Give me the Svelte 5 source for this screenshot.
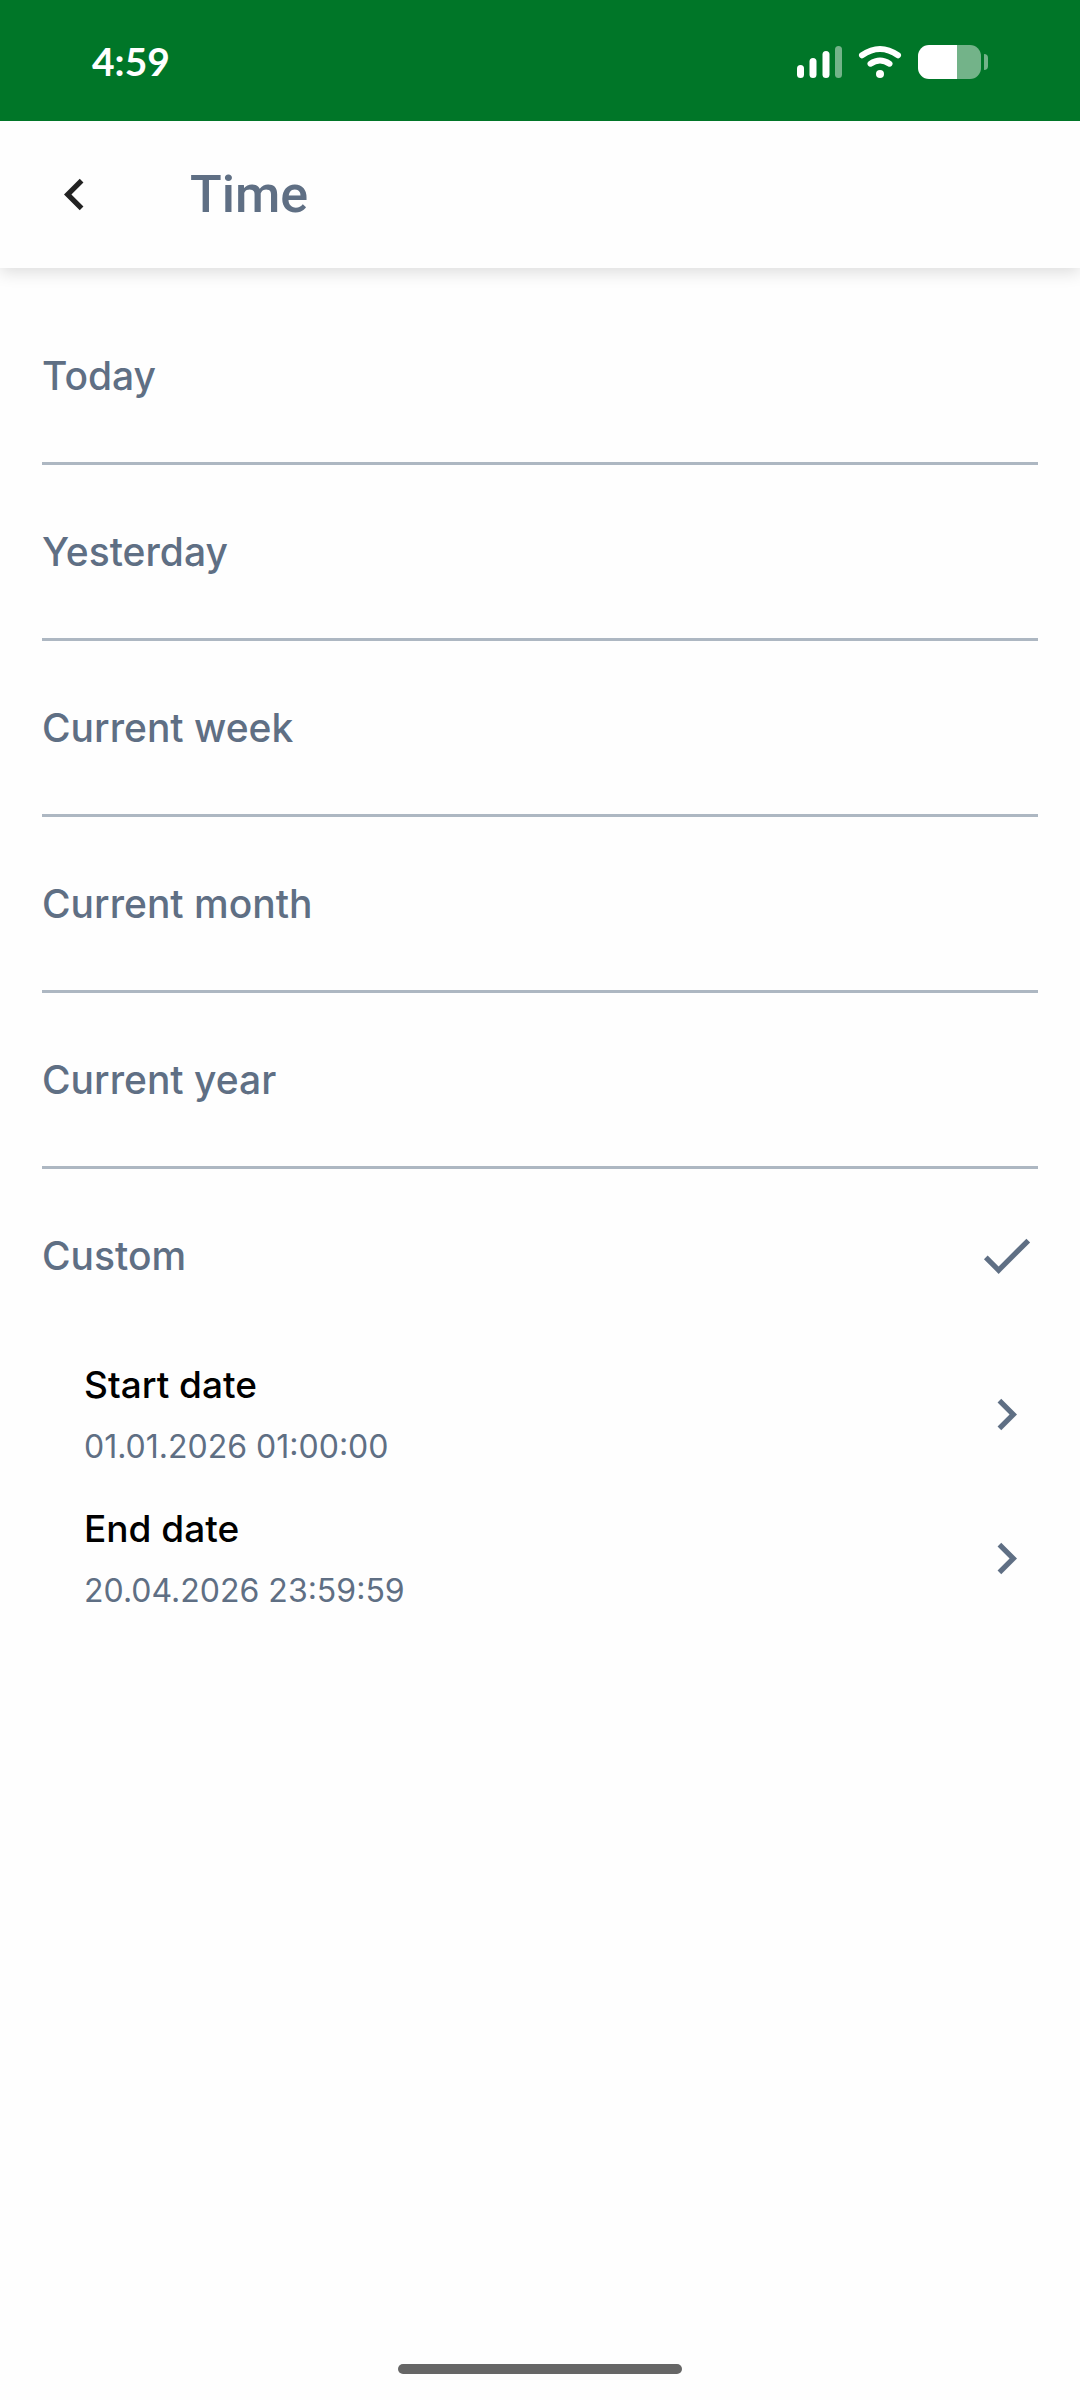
<script>
    let selected = $state('Custom');

    const periods = ['Today', 'Yesterday', 'Current week', 'Current month', 'Current year', 'Custom'];

    const dates = [
        { label: 'Start date', value: '01.01.2026 01:00:00' },
        { label: 'End date', value: '20.04.2026 23:59:59' }
    ];
</script>

<div class="screen">
    <div class="status-bar">
        <span class="clock">4:59</span>
        <div class="indicators">
            <svg width="45" height="34" viewBox="0 0 45 34" fill="#fff" aria-hidden="true">
                <rect x="0" y="20" width="7" height="13" rx="3.5" />
                <rect x="12.5" y="13" width="7" height="20" rx="3.5" />
                <rect x="25.5" y="6" width="7" height="27" rx="3.5" />
                <rect x="38" y="1" width="7" height="32" rx="3.5" opacity="0.45" />
            </svg>
            <svg width="44" height="34" viewBox="0 0 44 34" fill="none" stroke="#fff" stroke-width="6" stroke-linecap="round" aria-hidden="true">
                <path d="M4 10.3Q22 -2.3 40 10.3" />
                <path d="M12.5 18.7Q22 12.3 31.5 18.7" />
                <circle cx="22" cy="29" r="4" fill="#fff" stroke="none" />
            </svg>
            <svg width="70" height="34" viewBox="0 0 70 34" aria-hidden="true">
                <path d="M39 0H52a11 11 0 0 1 11 11V23a11 11 0 0 1-11 11H39z" fill="#fff" opacity="0.45" />
                <path d="M39 0H11A11 11 0 0 0 0 11V23A11 11 0 0 0 11 34H39z" fill="#fff" />
                <path d="M66 9a4 4 0 0 1 4 4V21a4 4 0 0 1-4 4z" fill="#fff" opacity="0.45" />
            </svg>
        </div>
    </div>

    <header>
        <button class="back" aria-label="Back">
            <svg class="icon" viewBox="0 0 24 24" aria-hidden="true">
                <path d="M15.41 7.41L14 6l-6 6 6 6 1.41-1.41L10.83 12z" />
            </svg>
        </button>
        <h1>Time</h1>
    </header>

    <main>
        <ul class="periods">
            {#each periods as period}
                <li>
                    <button class="period" aria-pressed={selected === period} onclick={() => (selected = period)}>
                        <span>{period}</span>
                        {#if selected === period}
                            <svg class="icon" viewBox="0 0 24 24" aria-hidden="true">
                                <path d="M9 16.17L4.83 12l-1.42 1.41L9 19 21 7l-1.41-1.41z" />
                            </svg>
                        {/if}
                    </button>
                </li>
            {/each}
        </ul>

        {#if selected === 'Custom'}
            <div class="dates">
                {#each dates as date}
                    <button class="date">
                        <span class="date-text">
                            <span class="label">{date.label}</span>
                            <span class="value">{date.value}</span>
                        </span>
                        <svg class="icon" viewBox="0 0 24 24" aria-hidden="true">
                            <path d="M10 6L8.59 7.41 13.17 12l-4.58 4.59L10 18l6-6z" />
                        </svg>
                    </button>
                {/each}
            </div>
        {/if}
    </main>

    <div class="home-indicator"></div>
</div>

<style>
    :global(body) {
        background: #fefefe;
    }

    .screen {
        min-height: 100vh;
        display: flex;
        flex-direction: column;
        font-family: Inter, "Liberation Sans", sans-serif;
        color: #5f6f84;
    }

    .status-bar {
        position: relative;
        z-index: 1;
        height: 121px;
        box-sizing: border-box;
        padding: 0 92px;
        display: flex;
        align-items: center;
        justify-content: space-between;
        background: #007628;
        color: #fff;
    }

    .clock {
        font-family: Lato, sans-serif;
        font-size: 39px;
        font-weight: 700;
    }

    .indicators {
        display: flex;
        align-items: center;
        gap: 16px;
        padding-top: 2px;
    }

    header {
        height: 147px;
        display: flex;
        align-items: center;
        gap: 84px;
        padding: 0 43px;
        background: #fefefe;
        box-shadow: 0 4px 16px rgba(0, 0, 0, 0.14);
    }

    h1 {
        margin: 0;
        font-family: Roboto, sans-serif;
        font-size: 52px;
        font-weight: 500;
        line-height: 64px;
    }

    button {
        padding: 0;
        border: none;
        background: none;
        font: inherit;
        color: inherit;
        text-align: left;
        cursor: pointer;
    }

    .icon {
        display: block;
        width: 63px;
        height: 63px;
        flex: none;
        fill: currentColor;
    }

    .back {
        color: #222;
    }

    main {
        flex: 1;
        padding: 21px 42px;
    }

    .periods {
        margin: 0;
        padding: 0;
        list-style: none;
    }

    .periods li + li {
        border-top: 3px solid #adb7c2;
    }

    .period {
        width: 100%;
        height: 173px;
        display: flex;
        align-items: center;
        justify-content: space-between;
        font-size: 39px;
        font-weight: 500;
    }

    .dates {
        padding-left: 42px;
    }

    .date {
        width: 100%;
        height: 144px;
        display: flex;
        align-items: center;
        justify-content: space-between;
    }

    .date-text {
        display: flex;
        flex-direction: column;
        padding-top: 4px;
        gap: 14px;
    }

    .label {
        color: #000;
        font-size: 37px;
        font-weight: 500;
        line-height: 48px;
    }

    .value {
        font-size: 32px;
        line-height: 48px;
    }

    .home-indicator {
        width: 284px;
        height: 10px;
        margin: 0 auto 26px;
        border-radius: 5px;
        background: #666;
    }
</style>
